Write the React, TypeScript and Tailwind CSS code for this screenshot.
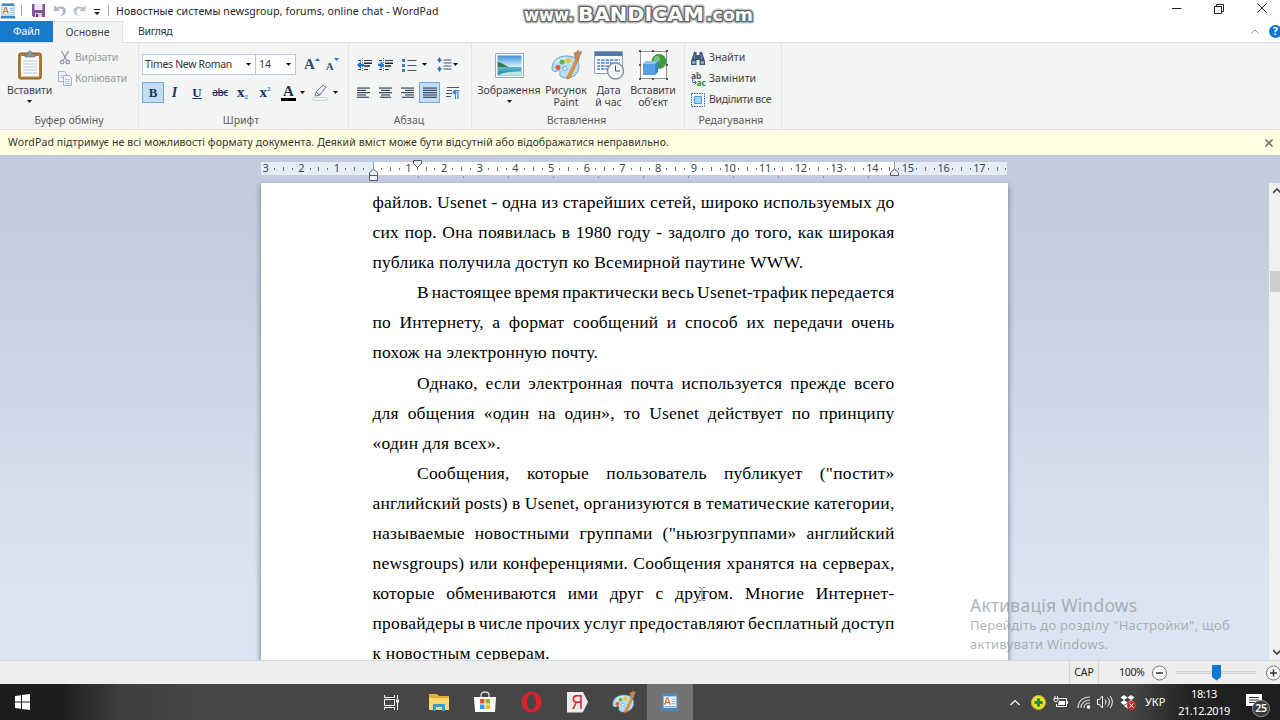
import React, { ReactNode } from 'react'

const LINES: { text: string; indent?: boolean; last?: boolean }[] = [
  { text: 'файлов. Usenet - одна из старейших сетей, широко используемых до' },
  { text: 'сих пор. Она появилась в 1980 году - задолго до того, как широкая' },
  { text: 'публика получила доступ ко Всемирной паутине WWW.', last: true },
  { text: 'В настоящее время практически весь Usenet-трафик передается', indent: true },
  { text: 'по Интернету, а формат сообщений и способ их передачи очень' },
  { text: 'похож на электронную почту.', last: true },
  { text: 'Однако, если электронная почта используется прежде всего', indent: true },
  { text: 'для общения «один на один», то Usenet действует по принципу' },
  { text: '«один для всех».', last: true },
  { text: 'Сообщения, которые пользователь публикует ("постит»', indent: true },
  { text: 'английский posts) в Usenet, организуются в тематические категории,' },
  { text: 'называемые новостными группами ("ньюзгруппами» английский' },
  { text: 'newsgroups) или конференциями. Сообщения хранятся на серверах,' },
  { text: 'которые обмениваются ими друг с другом. Многие Интернет-' },
  { text: 'провайдеры в числе прочих услуг предоставляют бесплатный доступ' },
  { text: 'к новостным серверам.', last: true },
]

const Arrow = ({ className = '' }: { className?: string }) => (
  <svg className={`shrink-0 ${className}`} width="5" height="3" viewBox="0 0 5 3">
    <path d="M0 0h5L2.5 3z" fill="#111" />
  </svg>
)

const WordPadIcon = ({ size }: { size: number }) => (
  <svg width={size} height={size} viewBox="0 0 16 16" className="shrink-0">
    <path d="M2 1h12v13H2z" fill="#eef5fb" stroke="#6fa3cc" strokeWidth=".7" />
    <path d="M2 .5h12v2.500H2z" fill="#3e8ac9" />
    <path d="M1 13h14l.5 2.500H.5z" fill="#3e8ac9" />
    <path d="M3.200 10.500l2-6h1l2 6M4 8.500h3.400" stroke="#c8742c" strokeWidth="1.100" fill="none" />
    <path d="M9.500 5.500h3.500M9.500 7.500h3.500M9.500 9.500h3.500M3 12h10" stroke="#78aede" strokeWidth=".8" />
  </svg>
)

const PaletteIcon = ({ width, height }: { width: number; height: number }) => (
  <svg width={width} height={height} viewBox="0 0 31 30" className="shrink-0">
    <path d="M15 6C7 6 1 11 1 18c0 3 2 4 5 3 2-1 4 0 3 2-1 3 2 5 6 5 8 0 13-5 13-12S23 6 15 6z" fill="#b8dcf0" stroke="#5e9dc4" strokeWidth=".9" />
    <path d="M4 14C6 9 11 7 17 8c-5 1-9 3-13 6z" fill="#e6f5fc" />
    <circle cx="7" cy="17.500" r="2.500" fill="#df5a3c" />
    <circle cx="11" cy="12" r="2.500" fill="#68b33e" />
    <circle cx="17.500" cy="10.500" r="2.500" fill="#f0c22e" />
    <circle cx="14" cy="18.500" r="2" fill="#fff" stroke="#4f94c0" strokeWidth=".8" />
    <path d="M25 9l2 1.500L19 28l-3 1 .6-3z" fill="#e8963c" stroke="#b5651d" strokeWidth=".6" />
    <path d="M24.500 9.500L23 3l3-1 1-2 1 2 3-.500-2 4-1.500 5z" fill="#c08a5c" stroke="#9a6234" strokeWidth=".5" />
  </svg>
)

const Align = ({ rows }: { rows: [number, number][] }) => (
  <svg width="14" height="12" viewBox="0 0 14 12" className="shrink-0">
    {rows.map(([x, w], i) => (
      <rect key={i} x={x} y={.5 + i * 2.300} width={w} height="1.100" fill="#2c3a4e" />
    ))}
  </svg>
)

const Indent = ({ out = false }: { out?: boolean }) => (
  <svg width="15" height="14" viewBox="0 0 15 14" className="shrink-0">
    <path d="M1 2.500h3M7 2.500h8M1 11.500h3M7 11.500h4" stroke="#33404f" />
    <path d="M7 5.200h8M7 8h6" stroke="#1b2736" strokeWidth="1.600" />
    <path d="M5.500 0v14" stroke="#555" strokeWidth=".8" strokeDasharray="1 1" />
    {out ? <path d="M4 3L0 7l4 4V8.200h3V5.800H4z" fill="#2476c8" /> : <path d="M2.500 3l4 4-4 4V8.200H0V5.800h2.500z" fill="#2476c8" />}
  </svg>
)

const Group = ({ title, className, children }: { title: string; className: string; children: ReactNode }) => (
  <section className={`flex h-[86px] shrink-0 flex-col border-r border-[#e1e3e5] ${className}`}>
    <div className="h-[69px]">{children}</div>
    <p className="text-center leading-[18px] text-[#5c5c5c]">{title}</p>
  </section>
)

const TitleBar = () => (
  <header className="relative z-10 flex h-[21px] items-center bg-white">
    <div className="flex w-[110px] shrink-0 items-center">
      <WordPadIcon size={16} />
      <i className="ml-[5px] h-[11px] w-px bg-[#aaa]" />
      <svg className="ml-[10px]" width="13" height="13" viewBox="0 0 13 13">
        <path d="M0 0h13v13H1.500L0 11.500z" fill="#80569b" />
        <path d="M2.500 0h8v6h-8z" fill="#eee7f3" />
        <path d="M3 9h7v4H3z" fill="#d9cce2" />
        <path d="M4 10h2v3H4z" fill="#5d3b76" />
      </svg>
      <svg className="ml-[9px]" width="12" height="12" viewBox="0 0 12 12">
        <path d="M0 0v6h6L4 4c3-1 5 0 5 2.500 0 2-1 3.500-3 5 4-1 6-3 6-6C12 2 7 0 2.500 2.500z" fill="#a9b6c9" />
      </svg>
      <svg className="ml-[7px]" width="13" height="12" viewBox="0 0 12 12">
        <path d="M12 0v6H6l2-2C5 3 3 4 3 6.500c0 2 1 3.500 3 5-4-1-6-3-6-6C0 2 5 0 9.500 2.500z" fill="#b7c1cf" />
      </svg>
      <svg className="ml-[8px] mt-[2px]" width="6" height="6" viewBox="0 0 6 6">
        <path d="M0 .5h6" stroke="#222" />
        <path d="M0 3h6L3 6z" fill="#222" />
      </svg>
      <i className="ml-[8px] h-[11px] w-px bg-[#aaa]" />
    </div>
    <h1 className="ml-[6px] w-[400px] whitespace-nowrap text-[10.500px] leading-[20px] tracking-[0.110px] text-[#1c1c1c]">
      Новостные системы newsgroup, forums, online chat - WordPad
    </h1>
    <svg className="mt-[16px] h-[29px] w-[244px] shrink-0 overflow-visible" viewBox="0 0 244 29">
      <g fontFamily="'DejaVu Sans', sans-serif" fontWeight="700" fill="#fff" strokeLinejoin="round" paintOrder="stroke">
        <g stroke="#8a8a8a" strokeWidth="5" opacity=".5">
          <text x="8" y="16.500" fontSize="17" textLength="50" lengthAdjust="spacingAndGlyphs">www.</text>
          <text x="62" y="16.500" fontSize="19" textLength="126" lengthAdjust="spacingAndGlyphs">BANDICAM</text>
          <text x="190" y="16.500" fontSize="17" textLength="47" lengthAdjust="spacingAndGlyphs">.com</text>
        </g>
        <g stroke="#666" strokeWidth="2.600">
          <text x="8" y="16.500" fontSize="17" textLength="50" lengthAdjust="spacingAndGlyphs">www.</text>
          <text x="62" y="16.500" fontSize="19" textLength="126" lengthAdjust="spacingAndGlyphs">BANDICAM</text>
          <text x="190" y="16.500" fontSize="17" textLength="47" lengthAdjust="spacingAndGlyphs">.com</text>
        </g>
      </g>
    </svg>
    <svg className="mb-[3px] ml-auto mr-[8px]" width="100" height="14" viewBox="0 0 100 14" fill="none" stroke="#222">
      <path d="M0 6.500h9.500" />
      <path d="M42.500 4.500h7v7h-7zM44.500 4v-1.500h7v7H50" />
      <path d="M85.500 1.500l9 9M94.500 1.500l-9 9" />
    </svg>
  </header>
)

const Tabs = () => (
  <nav className="flex h-[21px] items-center bg-white">
    <span className="h-full w-[53px] bg-[#1979ca] text-center leading-[21px] text-white">Файл</span>
    <span className="relative h-[22px] w-[70px] self-start border-r border-t border-[#e0e2e4] bg-[#f3f4f4] text-center leading-[20px] text-[#444]">Основне</span>
    <span className="ml-[15px] tracking-[-0.300px] text-[#333]">Вигляд</span>
    <svg className="ml-auto" width="8" height="5" viewBox="0 0 8 5">
      <path d="M.5 4.500L4 1l3.500 3.500" stroke="#999" fill="none" />
    </svg>
    <span className="-mr-[2px] ml-[10px] h-[13px] w-[13px] shrink-0 rounded-full bg-[#1278cc] text-center text-[10px] font-bold leading-[13px] text-white">?</span>
  </nav>
)

const FontGroup = () => (
  <Group title="Шрифт" className="w-[210px] pl-[3px] [&>p]:-ml-[8px]">
    <div className="mt-[11px] flex h-[21px]">
      <div className="flex w-[114px] items-center justify-between border border-[#b9c9de] bg-white pl-[2px] pr-[4px] text-[#333]">
        <span className="whitespace-nowrap tracking-[-0.320px]">Times New Roman</span>
        <Arrow />
      </div>
      <div className="-ml-px flex w-[41px] items-center justify-between border border-[#b9c9de] bg-white pl-[3px] pr-[4px] text-[#333]">
        14 <Arrow />
      </div>
      <div className="ml-[8px] flex items-center font-['Liberation_Serif',serif] text-[15px] font-bold text-[#35506f]">
        A<svg className="-mt-[10px]" width="5" height="3"><path d="M0 3h5L2.500 0z" fill="#2476c8" /></svg>
      </div>
      <div className="ml-[6px] flex items-center pt-[3px] font-['Liberation_Serif',serif] text-[11px] font-bold text-[#35506f]">
        A<svg className="-mt-[14px]" width="5" height="3"><path d="M0 0h5L2.500 3z" fill="#2476c8" /></svg>
      </div>
    </div>
    <div className="mt-[7px] flex h-[21px] items-center text-[#1b3557]">
      <b className="h-[21px] w-[22px] border border-[#72a9de] bg-[#c3ddf6] text-center font-['Liberation_Serif',serif] text-[13px] leading-[19px]">B</b>
      <b className="w-[21px] text-center font-['Liberation_Serif',serif] text-[14px] italic">I</b>
      <b className="w-[24px] text-center font-['Liberation_Serif',serif] text-[13px] underline">U</b>
      <span className="w-[22px] text-center text-[10px] font-medium tracking-[-0.500px] line-through">abc</span>
      <b className="flex h-[16px] w-[23px] items-end justify-center font-['Liberation_Serif',serif] text-[15px] leading-[17px]">x<small className="text-[7px] leading-[7px] text-[#2476c8]">2</small></b>
      <b className="flex h-[16px] w-[22px] items-start justify-center font-['Liberation_Serif',serif] text-[15px] leading-[15px]">x<small className="text-[7px] leading-[8px] text-[#2476c8]">2</small></b>
      <div className="ml-[5px] flex h-[17px] w-[15px] flex-col items-center border-b-[3px] border-black font-['Liberation_Serif',serif] text-[15px] font-bold leading-[14px]">A</div>
      <Arrow className="ml-[4px]" />
      <svg className="ml-[7px]" width="17" height="17" viewBox="0 0 17 17">
        <path d="M3 12l1-4 7-7 3 2-6 8z" fill="#e6ebf0" stroke="#6c7a89" />
        <path d="M4 8l4 3" stroke="#6c7a89" />
        <path d="M1 13.500h14v2.500H1z" fill="#fff" stroke="#b5b9bd" strokeWidth=".7" />
      </svg>
      <Arrow className="ml-[4px]" />
    </div>
  </Group>
)

const ParagraphGroup = () => (
  <Group title="Абзац" className="w-[123px] pl-[8px] [&>p]:-ml-[10px]">
    <div className="mt-[11px] flex h-[21px] items-center">
      <Indent out />
      <span className="w-[6px]" />
      <Indent />
      <svg className="ml-[9px]" width="15" height="14" viewBox="0 0 15 14">
        <path d="M0 1h3v3H0zM0 6h3v3H0zM0 11h3v3H0z" fill="#3e7cc4" />
        <path d="M5.500 2.500h9M5.500 7.500h9M5.500 12.500h9" stroke="#47566a" />
      </svg>
      <Arrow className="ml-[5px]" />
      <svg className="ml-[10px]" width="15" height="15" viewBox="0 0 15 15">
        <path d="M2.500 0L5 4H3.300v1.500H1.700V4H0zM2.500 15L5 11H3.300V9.500H1.700V11H0z" fill="#2476c8" />
        <path d="M6.500 3h8M6.500 6h8M6.500 9h8M6.500 12h8" stroke="#47566a" />
      </svg>
      <Arrow className="ml-[1px]" />
    </div>
    <div className="mt-[7px] flex h-[21px] items-center">
      <Align rows={[[0, 13], [0, 9], [0, 13], [0, 9], [0, 12]]} />
      <span className="w-[8px]" />
      <Align rows={[[0, 13], [2, 9], [0, 13], [2, 9], [1, 11]]} />
      <span className="w-[8px]" />
      <Align rows={[[0, 13], [4, 9], [0, 13], [4, 9], [1, 12]]} />
      <div className="ml-[4px] flex h-[21px] w-[21px] items-center justify-center border border-[#72a9de] bg-[#c3ddf6]">
        <Align rows={[[0, 14], [0, 14], [0, 14], [0, 14], [0, 14]]} />
      </div>
      <svg className="ml-[6px]" width="14" height="13" viewBox="0 0 14 13">
        <path d="M1 1.500h12M1 4.500h5M0 7.500h6M0 10.500h5" stroke="#47566a" />
        <path d="M8 4.500h5.500M9.500 4.500V13M12 4.500V13" stroke="#3e8acb" strokeWidth="1.200" />
        <circle cx="8.500" cy="6.300" r="2" fill="#3e8acb" />
      </svg>
    </div>
  </Group>
)

const BigButton = ({ icon, lines, className, arrow }: { icon: ReactNode; lines: string[]; className: string; arrow?: boolean }) => (
  <div className={`flex shrink-0 flex-col items-center text-center leading-[12px] text-[#3f3f3f] ${className}`}>
    <div className="mb-[3px] flex h-[32px] items-center">{icon}</div>
    {lines.map((l) => <span key={l} className="whitespace-nowrap">{l}</span>)}
    {arrow && <Arrow className="mt-[4px]" />}
  </div>
)

const InsertGroup = () => (
  <Group title="Вставлення" className="w-[213px] [&>p]:-ml-[3px]">
    <div className="-ml-px flex pt-[6px]">
      <BigButton className="w-[76px]" arrow lines={['Зображення']} icon={
        <svg width="29" height="25" viewBox="0 0 29 25">
          <defs>
            <linearGradient id="sky" x1="0" y1="0" x2="0" y2="1">
              <stop offset="0" stopColor="#3d8fd6" /><stop offset=".55" stopColor="#d6effa" /><stop offset=".6" stopColor="#5ab9c9" /><stop offset="1" stopColor="#237fa8" />
            </linearGradient>
          </defs>
          <path d="M.5.500h28v24H.5z" fill="#fff" stroke="#9cacb9" />
          <path d="M2.500 2.500h24v20h-24z" fill="url(#sky)" />
          <path d="M2.500 9c4 0 6 3 12 5H2.500z" fill="#3b7b54" />
          <path d="M2.500 22.500c5-3 12-4 24-4v4z" fill="#bde5df" />
        </svg>
      } />
      <BigButton className="w-[38px]" lines={['Рисунок', 'Paint']} icon={<PaletteIcon width={31} height={30} />} />
      <BigButton className="w-[47px]" lines={['Дата', 'й час']} icon={
        <svg width="30" height="29" viewBox="0 0 30 29">
          <path d="M.5.500h28v22H.5z" fill="#fff" stroke="#8d9aa8" />
          <path d="M1 1h27v4H1z" fill="#4b78ad" />
          <path d="M3 9h23M3 12h23M3 15h23M3 18h23" stroke="#6ba3df" strokeWidth="2" />
          <path d="M6.500 7v13M11 7v13M15.500 7v13M20 7v13M24.500 7v13" stroke="#fff" />
          <circle cx="21.500" cy="20" r="8" fill="#f1f3f5" stroke="#8b949d" strokeWidth="1.400" />
          <path d="M21.500 14.500V20h4.500" stroke="#47525e" fill="none" />
        </svg>
      } />
      <BigButton className="w-[42px] tracking-[-0.150px]" lines={['Вставити', 'об\'єкт']} icon={
        <svg width="29" height="30" viewBox="0 0 29 30">
          <path d="M1.500 1.500h26v27h-26z" fill="#fff" stroke="#777" strokeWidth=".8" />
          <circle cx="20" cy="11.500" r="7.500" fill="#3d9b42" />
          <circle cx="18" cy="9" r="3" fill="#80c97a" />
          <path d="M4 14l3-3h12v11l-3 3H4z" fill="#3b84d2" />
          <path d="M4 14h12v11H4z" fill="#579fe4" />
          <path d="M4 14l3-3h12l-3 3z" fill="#92c5f2" />
          <path d="M0 0h2v2H0zM13 0h2v2h-2zM27 0h2v2h-2zM0 14h2v2H0zM27 14h2v2h-2zM0 28h2v2H0zM13 28h2v2h-2zM27 28h2v2h-2z" fill="#555" />
        </svg>
      } />
    </div>
  </Group>
)

const Ribbon = () => (
  <div className="flex h-[88px] border-b border-t border-[#dcdfe2] bg-[#f3f4f4]">
    <Group title="Буфер обміну" className="w-[139px]">
      <div className="flex pt-[6px]">
        <BigButton className="w-[59px] tracking-[-0.200px]" arrow lines={['Вставити']} icon={
          <svg width="24" height="30" viewBox="0 0 24 30">
            <rect x=".7" y="3" width="22.600" height="26" rx="2" fill="#b47c35" stroke="#8d5c20" />
            <path d="M3 6h18v20.500H3z" fill="#f9fbfd" />
            <path d="M5 11h14M5 14h14M5 17h14M5 20h14M5 23h14" stroke="#b9c6d3" />
            <path d="M7 7V4h3c0-4 4-4 4 0h3v3z" fill="#8d979f" stroke="#5f676d" strokeWidth=".6" />
          </svg>
        } />
        <div className="-ml-px -mt-px flex flex-col text-[#9b9b9b]">
          <div className="flex h-[20px] items-center tracking-[-0.200px]">
            <svg className="ml-[2px] mr-[5px]" width="10" height="14" viewBox="0 0 10 14" fill="none" stroke="#8f9bab" strokeWidth="1.300">
              <path d="M1.500 0l5 9M8.500 0l-5 9" />
              <circle cx="2.200" cy="11" r="1.700" /><circle cx="7.800" cy="11" r="1.700" />
            </svg>
            Вирізати
          </div>
          <div className="flex h-[21px] items-center tracking-[-0.100px]">
            <svg className="mr-[3px]" width="14" height="15" viewBox="0 0 14 15" fill="#f1f4f8" stroke="#a5b2c2">
              <path d="M.5.500h6l2 2v8h-8z" /><path d="M5.500 4.500h6l2 2v8h-8z" />
              <path d="M7 8.500h5M7 10.500h5M7 12.500h5M2 4.500h3M2 6.500h3" strokeWidth=".7" />
            </svg>
            Копіювати
          </div>
        </div>
      </div>
    </Group>
    <FontGroup />
    <ParagraphGroup />
    <InsertGroup />
    <Group title="Редагування" className="w-[97px] [&>p]:-ml-[4px]">
      <div className="flex flex-col pl-[6px] pt-[5px] text-[#3f3f3f]">
        <div className="flex h-[20px] items-center gap-[4px]">
          <svg width="14" height="13" viewBox="0 0 14 13">
            <path d="M3 0h2.500v3h3V0H11l1 3 2 6v4H8.500V8h-3v5H0V9l2-6z" fill="#3f5878" />
            <path d="M1.500 9.500h2.500v2H1.500zM10 9.500h2.500v2H10zM3.500 3v4M10.500 3v4" fill="#9fb4cf" stroke="#9fb4cf" strokeWidth=".6" />
          </svg>
          Знайти
        </div>
        <div className="flex h-[21px] items-center gap-[3px]">
          <div className="flex w-[15px] flex-col text-[8.500px] font-bold leading-[7px] text-[#47566a]">
            <span>ab</span>
            <span className="flex items-center justify-end text-[#2d8a35]">
              <svg width="5" height="6" viewBox="0 0 5 6"><path d="M.7 0v3.500H4M2.500 1.500l2 2-2 2" stroke="#2476c8" fill="none" /></svg>ac
            </span>
          </div>
          Замінити
        </div>
        <div className="flex h-[21px] items-center gap-[4px] whitespace-nowrap tracking-[-0.320px]">
          <svg className="shrink-0" width="14" height="14" viewBox="0 0 14 14">
            <path d="M.5.500h13v13H.5z" fill="#fff" stroke="#28619d" strokeDasharray="1.500 1" />
            <path d="M3.500 3.500h7v7h-7z" fill="#a9d4f7" stroke="#4c97db" />
          </svg>
          Виділити все
        </div>
      </div>
    </Group>
  </div>
)

// one cell per quarter of a centimetre, zero sits at the left margin
const Ruler = () => (
  <div className="relative ml-[261px] mt-[6px] h-[21px] w-[746px]">
    <div className="flex h-[13px] overflow-x-clip bg-[linear-gradient(90deg,#e6edf7_0_112px,#fff_112px_633px,#e6edf7_633px)]">
      {Array.from({ length: 84 }, (_, i) => {
        const n = Math.abs(i / 4 - 3)
        return (
          <span key={i} className="flex w-[8.925px] shrink-0 items-center justify-center text-[11px] leading-[13px] tracking-[-0.300px] text-[#3c4554]">
            {i % 4 === 0 ? (n === 0 ? '' : <span className="-mt-[2px]">{n}</span>) : i % 2 === 0 ? <i className="h-[4px] w-px bg-[#68707c]" /> : <i className="h-[2px] w-[1px] bg-[#68707c]" />}
          </span>
        )
      })}
    </div>
    <div className="flex gap-[44px] pl-[157px] pt-px">
      {Array.from({ length: 11 }, (_, i) => <i key={i} className="h-[2px] w-px bg-[#8b95a8]" />)}
    </div>
    <svg className="absolute left-[108px] top-0" width="9" height="20" viewBox="0 0 9 20" fill="#eef2f8" stroke="#555f70">
      <path d="M4.500 0v7" stroke="#999" />
      <path d="M.5 13.500v-3L4.500 7l4 3.500v3zM.5 13.500h8v5h-8z" />
    </svg>
    <svg className="absolute left-[152px] top-[-2px]" width="9" height="9" viewBox="0 0 9 9" fill="#eef2f8" stroke="#555f70">
      <path d="M.5.500h8v3l-4 4-4-4z" />
    </svg>
    <svg className="absolute left-[629px] top-0" width="9" height="15" viewBox="0 0 9 15" fill="#eef2f8" stroke="#555f70">
      <path d="M4.500 0v7" stroke="#999" />
      <path d="M.5 13.500v-3L4.500 7l4 3.500v3z" />
    </svg>
  </div>
)

const Workspace = () => (
  <main className="relative h-[504px] overflow-hidden bg-[linear-gradient(#c3cbde,#c7d1e3_30%,#dbe5f2_85%)]">
    <Ruler />
    <div className="flex h-[477px]">
      <article className="ml-[261px] h-full w-[747px] overflow-hidden bg-white pl-[111.500px] pt-[4px] font-['Liberation_Serif',serif] text-[17.500px] leading-[30.100px] tracking-[0.220px] text-black shadow-[0_3px_5px_1px_#7f8ca3]">
        {LINES.map(({ text, indent, last }) => (
          <p key={text} className={`w-[522px] whitespace-nowrap ${indent ? 'pl-[44.500px]' : ''} ${last ? '' : '[text-align-last:justify] [word-spacing:-2px]'}`}>{text}</p>
        ))}
      </article>
      <div className="ml-auto flex w-[11px] flex-col overflow-hidden bg-[#f0f0f0]">
        <svg className="ml-[4px] mt-[5px]" width="8" height="6"><path d="M0 5l4-4 4 4" fill="none" stroke="#444" strokeWidth="1.700" /></svg>
        <i className="ml-px mt-[77px] h-[21px] bg-[#cdcdcd]" />
        <svg className="mb-[5px] ml-[4px] mt-auto" width="8" height="6"><path d="M0 1l4 4 4-4" fill="none" stroke="#444" strokeWidth="1.700" /></svg>
      </div>
    </div>
    <svg className="absolute left-[698px] top-[431px]" width="8" height="14" viewBox="0 0 8 14" fill="none" stroke="#555" strokeWidth=".8">
      <path d="M1 .5h2l1 1 1-1h2M4 1.500v11M1 13.500h2l1-1 1 1h2" />
    </svg>
    <aside className="absolute left-[970px] top-[438px] w-[290px] text-[13px] leading-[19px] tracking-[0.270px] text-[#8d9196]/70">
      <p className="text-[17.500px] leading-[22px] tracking-[0.220px]">Активація Windows</p>
      <p className="whitespace-nowrap">Перейдіть до розділу "Настройки", щоб</p>
      <p>активувати Windows.</p>
    </aside>
  </main>
)

const StatusBar = () => (
  <footer className="flex h-[24px] items-center border-t border-[#d7d7d7] bg-[#eee] text-[#222]">
    <span className="ml-auto flex h-full w-[30px] items-center justify-center border-x border-[#d5d5d5]">CAP</span>
    <span className="ml-[20px] w-[27px] whitespace-nowrap tracking-[-0.300px]">100%</span>
    <svg className="ml-[6px]" width="128" height="18" viewBox="0 0 128 18" fill="none">
      <circle cx="7.500" cy="9" r="7" fill="#fafafa" stroke="#777" />
      <path d="M4 9h7" stroke="#333" strokeWidth="1.500" />
      <path d="M24 7.500h80v2H24z" fill="#e4e4e4" stroke="#c9c9c9" strokeWidth=".7" />
      <path d="M60 1h9v12l-4.500 3.500L60 13z" fill="#0f78d4" />
      <circle cx="121.500" cy="9" r="7" fill="#fafafa" stroke="#777" />
      <path d="M118 9h7M121.500 5.500v7" stroke="#333" strokeWidth="1.500" />
    </svg>
  </footer>
)

const Taskbar = () => (
  <footer className="flex h-[36px] items-center bg-[linear-gradient(90deg,#1c1c1c_0_60px,#3e3e3e_120px,#464646_200px_1130px,#222_1190px,#1d1d1d)] text-white">
    <svg className="ml-[15px]" width="15" height="16" viewBox="0 0 15 16" fill="#fff">
      <path d="M0 2l6-.8v6.300H0zM7 1l8-1v7.500H7zM0 8.500h6v6.300L0 14zM7 8.500h8V16l-8-1z" />
    </svg>
    <svg className="ml-[354px]" width="15" height="15" viewBox="0 0 15 15" fill="none" stroke="#fff">
      <path d="M.5 0v2.500h10V0M.5 15v-2.500h10V15M.5 4.500h10v6H.5zM13.500 0v4M13.500 8v7" />
      <path d="M12 4.500h3v3h-3z" fill="#fff" stroke="none" />
    </svg>
    <svg className="ml-[30px]" width="20" height="18" viewBox="0 0 20 18">
      <path d="M0 1h8l2 2h10v14H0z" fill="#e9ad37" />
      <path d="M0 5h20v12H0z" fill="#fbd86b" />
      <path d="M4 18v-7h12v7h-3v-4H7v4z" fill="#3f99d8" />
    </svg>
    <svg className="ml-[25px]" width="22" height="22" viewBox="0 0 22 22">
      <path d="M7 6V4c0-4 8-4 8 0v2" stroke="#ddd" strokeWidth="1.300" fill="none" />
      <path d="M0 6h22l-1 15H1z" fill="#fff" />
      <path d="M6 8h4.500v4.500H6z" fill="#e5562d" /><path d="M11.500 8H16v4.500h-4.500z" fill="#80b929" />
      <path d="M6 13.500h4.500V18H6z" fill="#2b9fe6" /><path d="M11.500 13.500H16V18h-4.500z" fill="#f6b91c" />
    </svg>
    <svg className="ml-[25px]" width="21" height="22" viewBox="0 0 21 22">
      <ellipse cx="10.500" cy="11" rx="10" ry="10.500" fill="#d9202e" />
      <ellipse cx="10.500" cy="11" rx="4.500" ry="7.500" fill="#444" />
    </svg>
    <div className="ml-[25px] flex h-[21px] w-[21px] items-center bg-[#ececec] pl-[3px] text-[20px] leading-none text-[#d9252a] [clip-path:polygon(0_0,75%_0,100%_50%,75%_100%,0_100%)]">
      <span className="font-['Liberation_Sans',sans-serif] [transform:scaleX(.8)]">Я</span>
    </div>
    <div className="ml-[24px] flex w-[25px]"><PaletteIcon width={24} height={24} /></div>
    <div className="ml-[10px] flex h-full w-[46px] items-center justify-center bg-[#737373]"><WordPadIcon size={18} /></div>
    <svg className="ml-auto" width="10" height="7"><path d="M.5 6L5 1.500 9.500 6" fill="none" stroke="#fff" strokeWidth="1.200" /></svg>
    <svg className="ml-[11px]" width="15" height="15" viewBox="0 0 15 15">
      <circle cx="7.500" cy="7.500" r="7" fill="#e8df35" stroke="#b9bd25" />
      <path d="M6 3.500h3V6h2.500v3H9v2.500H6V9H3.500V6H6z" fill="#208a38" />
    </svg>
    <svg className="ml-[7px]" width="15" height="12" viewBox="0 0 15 12" fill="none" stroke="#fff">
      <path d="M5.500 2.500h8v8h-10V8M2 0v2M4.500 0v2M1 2.500h4v2L3 6 1 4.500zM14.500 5v3" />
      <path d="M6 5h6v4H5z" fill="#fff" stroke="none" />
    </svg>
    <svg className="ml-[9px]" width="14" height="13" viewBox="0 0 14 13" fill="none" stroke="#ddd" strokeWidth="1.200">
      <path d="M1 12C1 5 6 1 13 1M4 12c0-5 4-8 9-8M7 12c0-3 2-5 6-5" />
      <circle cx="11.500" cy="11" r="1.300" fill="#fff" />
    </svg>
    <svg className="ml-[6px]" width="16" height="14" viewBox="0 0 16 14" fill="none" stroke="#fff">
      <path d="M.5 4.500h2l3-3.500v12l-3-3.500h-2zM8 4.500c1.300 1.500 1.300 3.500 0 5M10.500 2.500c2.500 2.500 2.500 6 0 9M13 1c3 3 3 9 0 12" />
    </svg>
    <svg className="ml-[7px]" width="16" height="15" viewBox="0 0 16 15">
      <path d="M4 0l3.500 2.500L4 5 .5 2.500zM11 0l3.500 2.500L11 5 7.500 2.500zM4 5l3.500 2.500L4 10 .5 7.500zM11 5l3.500 2.500L11 10 7.500 7.500zM7.500 8.500L11 11l-3.500 2.500L4 11z" fill="#fff" />
      <circle cx="11.500" cy="10.500" r="4.500" fill="#d32832" />
      <path d="M9.500 8.500l4 4M13.500 8.500l-4 4" stroke="#fff" />
    </svg>
    <span className="ml-[9px] w-[20px] text-[11px]">УКР</span>
    <div className="ml-[13px] w-[52px] whitespace-nowrap text-center text-[11px] leading-[17px] tracking-[-0.450px]">
      <p>18:13</p>
      <p>21.12.2019</p>
    </div>
    <div className="relative ml-[16px] mr-[8px] w-[26px]">
      <svg width="16" height="16" viewBox="0 0 16 16">
        <path d="M0 0h16v12h-6l-3 3v-3H0z" fill="#fff" />
        <path d="M3 3.500h10M3 6h10M3 8.500h6" stroke="#333" />
      </svg>
      <span className="absolute left-[6px] top-[6px] h-[17px] w-[18px] rounded-full border border-[#999] bg-[#3b3b3b] text-center text-[10.500px] font-semibold leading-[15px] tracking-[-0.300px]">25</span>
    </div>
  </footer>
)

export default function App() {
  return (
    <div className="flex h-[720px] w-[1280px] flex-col overflow-hidden font-['Noto_Sans','Open_Sans',sans-serif] text-[10.500px]">
      <TitleBar />
      <Tabs />
      <Ribbon />
      <div className="flex h-[26px] items-center justify-between border-b border-[#c9ccc4] bg-[#ffffe1] pl-[8px] pr-[7px] text-[#333]">
        <span className="tracking-[0.110px]">WordPad підтримує не всі можливості формату документа. Деякий вміст може бути відсутній або відображатися неправильно.</span>
        <svg width="8" height="8" viewBox="0 0 8 8"><path d="M.5.500l7 7M7.500.500l-7 7" stroke="#777" strokeWidth="1.700" /></svg>
      </div>
      <Workspace />
      <StatusBar />
      <Taskbar />
    </div>
  )
}
